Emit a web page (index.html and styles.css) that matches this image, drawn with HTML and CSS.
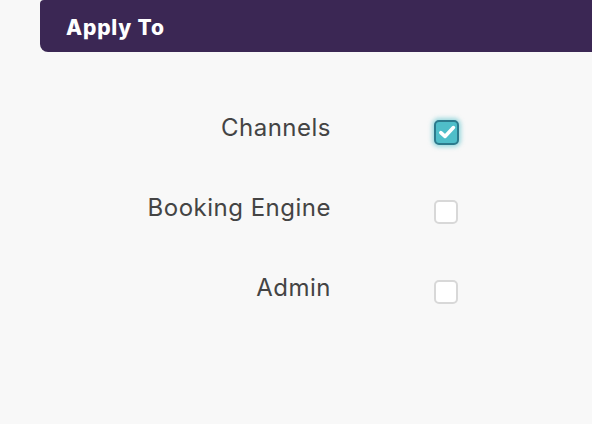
FILE: index.html
```html
<!DOCTYPE html>
<html lang="en">
<head>
    <meta charset="UTF-8">
    <meta name="viewport" content="width=device-width, initial-scale=1.0">
    <title>Apply To</title>
    <link rel="stylesheet" href="styles.css">
</head>
<body>

    <div class="panel">
        <div class="panel-header">
            <h2>Apply To</h2>
        </div>

        <div class="panel-body">
            <div class="field-row">
                <label class="field-label" for="channels">Channels</label>
                <span class="check checked" id="channels">
                    <svg viewBox="0 0 20 20" width="20" height="20">
                        <path d="M3.8 10.6 L8 14.4 L16.4 5.6" fill="none" stroke="#fff" stroke-width="3.6" stroke-linecap="round" stroke-linejoin="round"/>
                    </svg>
                </span>
            </div>
            <div class="field-row">
                <label class="field-label" for="booking">Booking Engine</label>
                <span class="check" id="booking"></span>
            </div>
            <div class="field-row">
                <label class="field-label" for="admin">Admin</label>
                <span class="check" id="admin"></span>
            </div>
        </div>
    </div>

</body>
</html>
```

FILE: styles.css
```css
body {
    margin: 0;
    padding: 0 0 0 40px;
    background-color: #f8f8f8;
    font-family: Inter, "Noto Sans", sans-serif;
    color: #444;
}

.panel-header {
    background-color: #3b2754;
    height: 52px;
    border-radius: 4px 0 0 8px;
    padding-left: 26px;
    display: flex;
    align-items: center;
}

.panel-header h2 {
    margin: 0;
    color: #fff;
    font-size: 21px;
    font-weight: 800;
    letter-spacing: 0.8px;
    margin-top: 3px;
}

.panel-body {
    padding-top: 56px;
}

.field-row {
    display: flex;
    align-items: center;
    height: 38px;
    margin-bottom: 42px;
}

.field-label {
    width: 291px;
    text-align: right;
    font-size: 24px;
    letter-spacing: 0.5px;
    color: #444;
}

.check {
    width: 20px;
    height: 20px;
    margin-left: 103px;
    border: 2px solid #d8d8d8;
    border-radius: 5px;
    background-color: #fff;
    display: flex;
    align-items: center;
    justify-content: center;
    margin-top: 10px;
}

.check.checked {
    width: 21px;
    height: 21px;
    background-color: #4fbec9;
    border-color: #2c7a8c;
    box-shadow: 0 0 4px 2px rgba(79, 190, 201, 0.55);
}
```
